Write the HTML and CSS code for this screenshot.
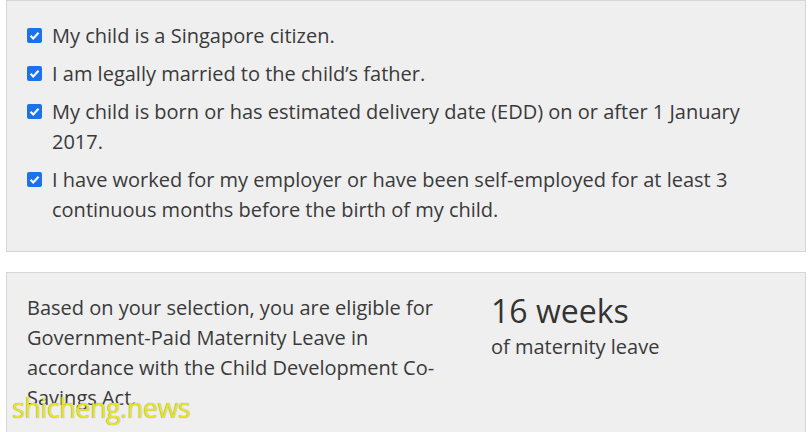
FILE: index.html
```html
<!DOCTYPE html>
<html lang="en">
<head>
    <meta charset="UTF-8">
    <meta name="viewport" content="width=device-width, initial-scale=1.0">
    <title>Maternity Leave Eligibility</title>
    <link rel="stylesheet" href="styles.css">
</head>
<body>
    <div class="panel">
        <ul class="checks">
            <li><span class="box"></span><span>My child is a Singapore citizen.</span></li>
            <li><span class="box"></span><span>I am legally married to the child’s father.</span></li>
            <li><span class="box"></span><span>My child is born or has estimated delivery date (EDD) on or after 1 January 2017.</span></li>
            <li><span class="box"></span><span>I have worked for my employer or have been self-employed for at least 3 continuous months before the birth of my child.</span></li>
        </ul>
    </div>

    <div class="panel result">
        <p class="summary">Based on your selection, you are eligible for Government-Paid Maternity Leave in accordance with the Child Development Co-Savings Act.</p>
        <div class="leave">
            <div class="weeks">16 weeks</div>
            <div class="unit">of maternity leave</div>
        </div>
    </div>

    <div class="watermark">shicheng.news</div>
</body>
</html>
```

FILE: styles.css
```css
body {
    margin: 0;
    padding: 0 4px 0 6px;
    background: #fff;
    font-family: "Open Sans", Arial, sans-serif;
    color: #3a3a3a;
    font-size: 20px;
    line-height: 30px;
    overflow: hidden;
}
.panel {
    background: #efefef;
    border: 1px solid #d6d6d6;
    padding: 20px 20px 26px 20px;
}
.checks {
    list-style: none;
    margin: 0;
    padding: 0;
}
.checks li {
    display: flex;
    gap: 10px;
    margin-bottom: 8px;
}
.checks li:last-child {
    margin-bottom: 0;
}
.box {
    flex: none;
    width: 15px;
    height: 15px;
    margin-top: 7px;
    border-radius: 2px;
    background: #1a73e8 url("data:image/svg+xml,%3Csvg xmlns='http://www.w3.org/2000/svg' viewBox='0 0 14 14'%3E%3Cpath d='M3.3 7.2l2.5 2.5 5-5.2' fill='none' stroke='white' stroke-width='2'/%3E%3C/svg%3E") no-repeat center;
}
.result {
    margin-top: 20px;
    display: grid;
    grid-template-columns: 442px 1fr;
    column-gap: 22px;
    padding-bottom: 40px;
}
.summary {
    margin: 0;
}
.weeks {
    font-size: 32px;
    line-height: 36px;
    color: #333;
}
.unit {
    margin-top: 3px;
}
.watermark {
    position: absolute;
    left: 12px;
    top: 393px;
    font-family: "Open Sans", Arial, sans-serif;
    font-size: 27px;
    color: #e6e61c;
    letter-spacing: -0.5px;
    text-shadow: 0 0 1px #888;
}
```
